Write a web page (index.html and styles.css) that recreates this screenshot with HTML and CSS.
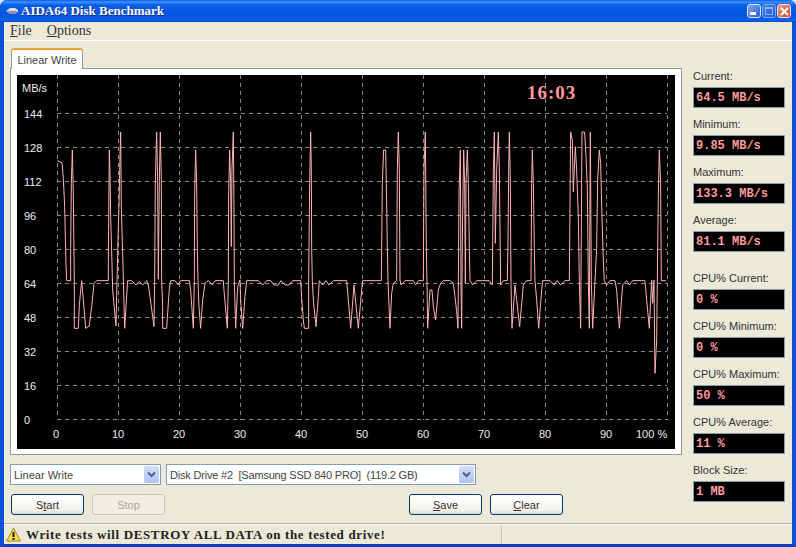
FILE: index.html
```html
<!DOCTYPE html>
<html lang="en">
<head>
    <meta charset="UTF-8">
    <title>AIDA64 Disk Benchmark</title>
    <link rel="stylesheet" href="styles.css">
</head>
<body>
    <div class="window">
        <div class="titlebar">
            <svg class="app-icon" width="12" height="8" viewBox="0 0 12 8"><path d="M0 4 L4 1 L9 1 L12 3 L12 5 L9 7 L4 7 Z" fill="#d8dce4"/><path d="M0 4 L4 4 L12 4 L9 7 L4 7 Z" fill="#8a93a8"/></svg>
            <span class="title">AIDA64 Disk Benchmark</span>
            <div class="caption-buttons">
                <div class="cap-btn"><span class="cap-min"></span></div>
                <div class="cap-btn cap-off"><span class="cap-max"></span></div>
                <div class="cap-btn cap-close">
                    <svg width="9" height="9" viewBox="0 0 9 9"><path d="M1 1 L8 8 M8 1 L1 8" stroke="#fff" stroke-width="2"/></svg>
                </div>
            </div>
        </div>

        <div class="menubar">
            <span><u>F</u>ile</span>
            <span><u>O</u>ptions</span>
        </div>

        <div class="main">
            <div class="left-col">
                <div class="tab">Linear Write</div>
                <div class="panel">
                    <svg class="chart" width="658" height="374" viewBox="17 75 658 374">
                        <rect x="17" y="75" width="658" height="374" fill="#000"/>
                        <path class="grid" d="M57.5 75V420 M118.5 75V420 M179.5 75V420 M240.5 75V420 M301.5 75V420 M362.5 75V420 M423.5 75V420 M484.5 75V420 M545.5 75V420 M606.5 75V420 M667.5 75V420"/>
                        <path class="grid" d="M57 113.5H667 M57 147.5H667 M57 181.5H667 M57 215.5H667 M57 249.5H667 M57 283.5H667 M57 317.5H667 M57 351.5H667 M57 385.5H667 M57 419.5H667"/>

                        <g transform="translate(50 120) scale(0.3333)">
                            <polyline class="trace" points="22,122 36,128 40,175 44,260 46,350 48,435 50,482 62,482 62,385 64,190 67,90 70,225 73,490 73,625 85,625 88,555 95,482 100,540 107,625 118,618 125,560 132,490 140,482 175,482 175,430 178,90 180,160 182,290 186,430 188,510 198,618 203,400 207,255 210,110 212,36 214,260 218,400 224,625 233,482 245,482 258,495 268,484 278,495 290,482 295,495 300,530 312,620 314,480 316,185 320,36 323,185 325,478 328,185 331,36 334,185 335,480 338,560 338,625 350,625 358,505 362,482 375,482 384,495 392,482 418,482 422,510 430,625 433,482 434,225 437,90 440,190 442,385 444,482 447,560 452,625 458,540 465,490 475,482 487,495 495,482 520,482 522,510 532,625 535,482 536,225 539,90 542,190 544,380 546,150 550,36 552,260 553,482 557,625 563,500 570,480 572,540 578,625 585,530 590,482 600,482"/>
                        </g>
                        <g transform="translate(250 120) scale(0.3333)">
                            <polyline class="trace" points="0,482 25,482 38,495 50,482 62,482 72,495 85,495 93,482 105,495 118,495 128,482 152,482 155,535 160,600 163,625 176,625 176,480 179,190 182,36 184,155 185,380 187,482 190,540 198,620 205,530 208,482 218,495 228,482 237,495 250,482 290,482 295,540 302,625 312,495 325,625 335,510 338,482 394,482 397,190 401,90 407,90 409,190 412,380 414,482 420,625 425,520 430,490 440,482 442,150 445,36 448,150 450,480 453,495 465,482 490,482 497,495 505,482 520,482 522,150 526,36 529,380 531,482 533,625 540,510 546,510 550,560 557,600 565,510 572,490 580,482 600,482"/>
                        </g>
                        <g transform="translate(450 120) scale(0.3333)">
                            <polyline class="trace" points="0,482 10,490 15,530 20,575 24,625 27,225 31,90 33,490 35,625 37,360 41,90 44,190 46,490 48,190 52,90 55,190 58,385 60,482 68,495 80,482 118,482 127,495 130,155 133,36 136,370 140,150 145,36 148,150 152,495 160,482 172,482 174,370 176,155 178,36 181,180 183,490 186,625 195,495 209,620 220,495 230,482 243,482 245,190 247,90 250,190 253,385 255,482 260,540 266,625 275,510 278,482 300,482 312,495 322,482 332,495 345,482 358,482 360,260 362,36 367,60 370,215 376,80 380,150 385,290 388,482 392,625 396,36 404,36 408,110 412,200 415,482 418,625 421,36 424,482 428,625 440,385 443,180 448,90 452,130 456,290 460,420 463,482 470,495 480,482 495,482 500,510 508,625 518,495 530,482 538,495 548,482 585,482 590,540 598,625 605,480 608,550 612,480 615,760 620,660 625,225 628,90 632,190 634,482 648,482"/>
                        </g>

                        <text class="axis" x="22" y="92">MB/s</text>
                        <text class="axis" x="24" y="118">144</text>
                        <text class="axis" x="24" y="152">128</text>
                        <text class="axis" x="24" y="186">112</text>
                        <text class="axis" x="24" y="220">96</text>
                        <text class="axis" x="24" y="254">80</text>
                        <text class="axis" x="24" y="288">64</text>
                        <text class="axis" x="24" y="322">48</text>
                        <text class="axis" x="24" y="356">32</text>
                        <text class="axis" x="24" y="390">16</text>
                        <text class="axis" x="24" y="424">0</text>

                        <text class="axis center" x="56" y="438">0</text>
                        <text class="axis center" x="118" y="438">10</text>
                        <text class="axis center" x="179" y="438">20</text>
                        <text class="axis center" x="240" y="438">30</text>
                        <text class="axis center" x="301" y="438">40</text>
                        <text class="axis center" x="362" y="438">50</text>
                        <text class="axis center" x="423" y="438">60</text>
                        <text class="axis center" x="484" y="438">70</text>
                        <text class="axis center" x="545" y="438">80</text>
                        <text class="axis center" x="606" y="438">90</text>
                        <text class="axis" x="636" y="438">100 %</text>

                        <text class="clock" x="527" y="99">16:03</text>
                    </svg>
                </div>

                <div class="selects">
                    <div class="combo combo-type">
                        <span>Linear Write</span>
                        <div class="combo-arrow"><svg width="9" height="7" viewBox="0 0 9 7"><path d="M1 1.5 L4.5 5 L8 1.5" fill="none" stroke="#4d6185" stroke-width="2"/></svg></div>
                    </div>
                    <div class="combo combo-drive">
                        <span>Disk Drive #2&nbsp; [Samsung SSD 840 PRO]&nbsp; (119.2 GB)</span>
                        <div class="combo-arrow"><svg width="9" height="7" viewBox="0 0 9 7"><path d="M1 1.5 L4.5 5 L8 1.5" fill="none" stroke="#4d6185" stroke-width="2"/></svg></div>
                    </div>
                </div>

                <div class="buttons">
                    <button>S<u>t</u>art</button>
                    <button class="disabled">Stop</button>
                    <button class="save"><u>S</u>ave</button>
                    <button><u>C</u>lear</button>
                </div>
            </div>

            <div class="side-col">
                <div class="field"><label>Current:</label><div class="value">64.5 MB/s</div></div>
                <div class="field"><label>Minimum:</label><div class="value">9.85 MB/s</div></div>
                <div class="field"><label>Maximum:</label><div class="value">133.3 MB/s</div></div>
                <div class="field"><label>Average:</label><div class="value">81.1 MB/s</div></div>
                <div class="field cpu-first"><label>CPU% Current:</label><div class="value">0 %</div></div>
                <div class="field"><label>CPU% Minimum:</label><div class="value">0 %</div></div>
                <div class="field"><label>CPU% Maximum:</label><div class="value">50 %</div></div>
                <div class="field"><label>CPU% Average:</label><div class="value">11 %</div></div>
                <div class="field"><label>Block Size:</label><div class="value">1 MB</div></div>
            </div>
        </div>

        <div class="statusbar">
            <div class="status-text">
                <svg width="15" height="15" viewBox="0 0 15 15"><path d="M7.5 1 L14.5 14 L0.5 14 Z" fill="#f6d94a" stroke="#a88a20" stroke-width="1" stroke-linejoin="round"/><path d="M7.5 5 V10 M7.5 11 V13" stroke="#222" stroke-width="2"/></svg>
                <span>Write tests will DESTROY ALL DATA on the tested drive!</span>
            </div>
        </div>
    </div>
</body>
</html>
```

FILE: styles.css
```css
* {
    box-sizing: border-box;
}

body {
    margin: 0;
    background-color: #dfe6f2;
    overflow: hidden;
}

.window {
    width: 796px;
    height: 547px;
    display: flex;
    flex-direction: column;
    background-color: #ece9d8;
    border-left: 4px solid #0b50d8;
    border-right: 4px solid #0b50d8;
    border-bottom: 3px solid #0a3fc4;
    border-radius: 7px 7px 0 0;
    font-family: "Liberation Sans", Arial, sans-serif;
    font-size: 11px;
    color: #222;
}

.titlebar {
    height: 22px;
    margin: 0 -4px;
    padding: 0 5px 0 6px;
    display: flex;
    align-items: center;
    border-radius: 7px 7px 0 0;
    background: linear-gradient(to bottom, #0a5ce8 0, #3a93ff 2px, #0a5de6 5px, #0654e0 16px, #0b62ee 20px, #0048c8 22px);
}

.app-icon {
    margin-right: 3px;
}

.title {
    font-family: "Liberation Serif", serif;
    font-weight: bold;
    font-size: 13px;
    color: #fff;
    text-shadow: 1px 1px 0 #0a2f90;
}

.caption-buttons {
    margin-left: auto;
    display: flex;
    gap: 1px;
}

.cap-btn {
    width: 14px;
    height: 14px;
    position: relative;
    border: 1px solid #dfe8fa;
    border-radius: 3px;
    background: linear-gradient(135deg, #7fa4f0, #2c5fd8);
    display: flex;
    align-items: center;
    justify-content: center;
}

.cap-off {
    opacity: 0.55;
}

.cap-close {
    background: linear-gradient(135deg, #f0a080, #d8401c);
}

.cap-min {
    position: absolute;
    left: 2px;
    bottom: 2px;
    width: 6px;
    height: 3px;
    background-color: #fff;
}

.cap-max {
    width: 8px;
    height: 8px;
    border: 1px solid #fff;
    border-top-width: 2px;
}

.menubar {
    height: 19px;
    padding-left: 6px;
    display: flex;
    gap: 15px;
    align-items: center;
    border-bottom: 1px solid #fff;
    font-family: "Liberation Serif", serif;
    font-size: 14px;
    color: #333;
}

.main {
    flex: 1;
    display: flex;
    padding: 7px 0 0 6px;
}

.left-col {
    width: 672px;
}

.tab {
    width: 72px;
    height: 21px;
    margin-left: 1px;
    position: relative;
    z-index: 1;
    padding-top: 4px;
    text-align: center;
    background-color: #fff;
    border: 1px solid #919b9c;
    border-top: 2px solid #f0a033;
    border-bottom: none;
    border-radius: 3px 3px 0 0;
    color: #444;
}

.panel {
    height: 387px;
    margin-top: -1px;
    padding: 6px;
    background-color: #fff;
    border: 1px solid #919b9c;
}

.chart {
    display: block;
}

.grid {
    fill: none;
    stroke: #8c8c8c;
    stroke-width: 1;
    stroke-dasharray: 4 4;
}

.trace {
    fill: none;
    stroke: #ffb4b4;
    stroke-width: 3;
}

.axis {
    font-family: "Liberation Sans", Arial, sans-serif;
    font-size: 11px;
    fill: #eee;
}

.center {
    text-anchor: middle;
}

.clock {
    font-family: "Liberation Serif", serif;
    font-weight: bold;
    font-size: 19px;
    letter-spacing: 1px;
    fill: #ff9a9a;
}

.selects {
    margin-top: 9px;
    display: flex;
    gap: 5px;
}

.combo {
    height: 21px;
    padding: 0 1px 0 3px;
    display: flex;
    align-items: center;
    justify-content: space-between;
    background-color: #fff;
    border: 1px solid #7f9db9;
    font-size: 11px;
    color: #444;
}

.combo-type {
    width: 151px;
}

.combo-drive {
    width: 310px;
    letter-spacing: -0.2px;
}

.combo-arrow {
    width: 15px;
    height: 17px;
    display: flex;
    align-items: center;
    justify-content: center;
    border-radius: 2px;
    background: linear-gradient(to bottom, #d5def8, #b0c4f2);
}

.buttons {
    margin-top: 9px;
    padding-left: 1px;
    display: flex;
    gap: 8px;
}

button {
    width: 73px;
    height: 21px;
    padding: 0;
    border: 1px solid #003c74;
    border-radius: 3px;
    background: linear-gradient(to bottom, #fff, #f2f1ea 80%, #dcd8cc);
    font-family: "Liberation Sans", Arial, sans-serif;
    font-size: 11px;
    color: #333;
}

button.disabled {
    border-color: #cac8bb;
    background: #f1efe4;
    color: #aca899;
}

button.save {
    margin-left: 236px;
}

.side-col {
    width: 92px;
    margin: 20px 0 0 11px;
}

.field {
    margin-bottom: 8px;
}

.cpu-first {
    margin-top: 18px;
}

.field label {
    display: block;
    height: 16px;
    margin-bottom: 3px;
    line-height: 16px;
    color: #333;
}

.value {
    height: 21px;
    padding-left: 2px;
    line-height: 20px;
    background-color: #000;
    border: 1px solid #8a9eaa;
    font-family: "Liberation Mono", monospace;
    font-weight: bold;
    font-size: 12px;
    color: #ff9c9c;
}

.statusbar {
    height: 21px;
    margin-top: auto;
    padding: 1px 0 0 2px;
    border-top: 1px solid #b0ad9c;
    box-shadow: inset 0 1px 0 #fff;
}

.status-text {
    width: 496px;
    height: 100%;
    display: flex;
    align-items: center;
    gap: 5px;
    border-right: 1px solid #c9c6b4;
    font-family: "Liberation Serif", serif;
    font-weight: bold;
    font-size: 13px;
    letter-spacing: 0.64px;
    color: #222;
}
```
